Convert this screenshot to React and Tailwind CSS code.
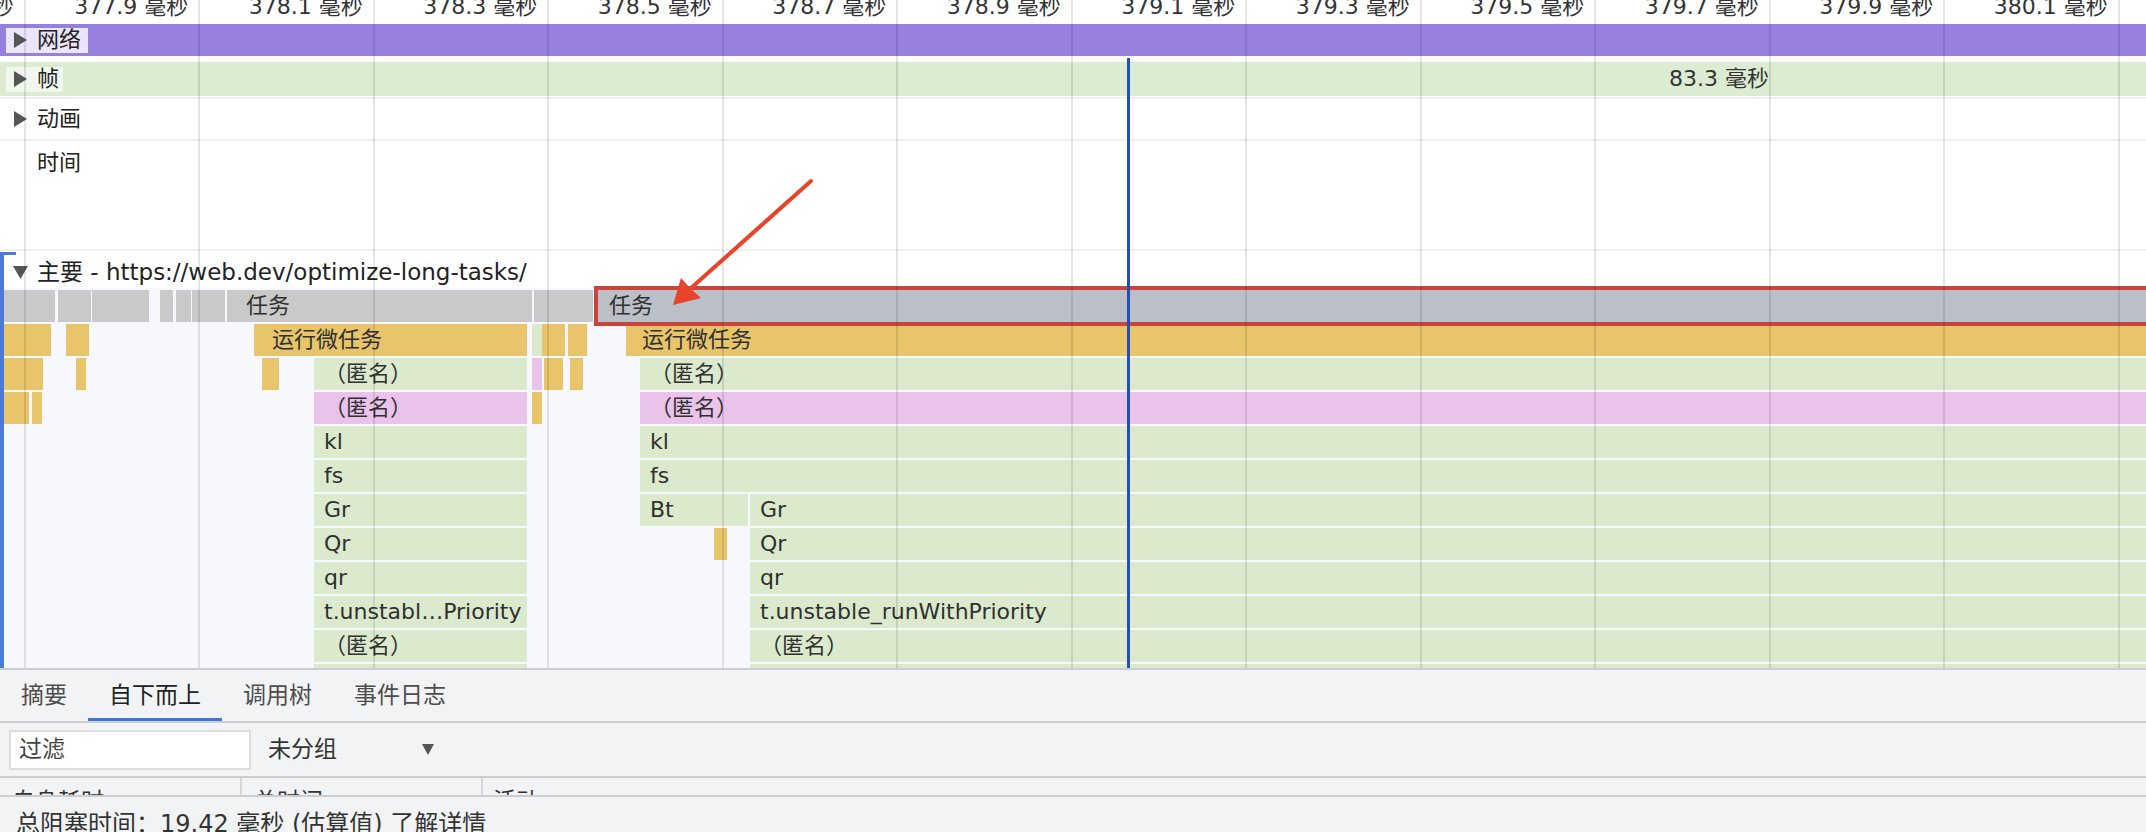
import React from 'react'

const FONT = "font-['DejaVu_Sans','Noto_Sans_CJK_SC',sans-serif]"

// grid lines of the time ruler (every 0.2 ms)
const GRID = Array.from({ length: 13 }, (_, i) => 24.8 + i * 174.5)
const TICKS = GRID.map((x, i) => ({ x, label: `${(377.7 + i * 0.2).toFixed(1)} 毫秒` }))

const COLORS = {
  g: 'bg-[#c9c9c9]',
  y: 'bg-[#e8c56a]',
  n: 'bg-[#dbeacc]',
  p: 'bg-[#eac3ea]',
}

const END = 2146

// flame chart rows: [from, to, color, label]
const ROWS = [
  [
    [3, 55, 'g'], [58, 63, 'g'], [64, 91, 'g'], [92, 149, 'g'], [160, 173, 'g'], [176, 191, 'g'],
    [192, 193, 'g'], [195, 197, 'g'], [202, 211, 'g'], [212, 225, 'g'], [227, 228, 'g'], [229, 231, 'g'],
    [236, 532, 'g', '任务'], [534, 593, 'g'],
  ],
  [
    [3, 51, 'y'], [66, 89, 'y'], [254, 257, 'y'], [262, 527, 'y', '运行微任务'], [532, 534, 'n'],
    [542, 565, 'y'], [568, 587, 'y'], [626, 629, 'y'], [632, END, 'y', '运行微任务'],
  ],
  [
    [3, 43, 'y'], [76, 85, 'y'], [262, 279, 'y'], [314, 527, 'n', '（匿名）'], [532, 534, 'p'],
    [544, 563, 'y'], [570, 583, 'y'], [640, END, 'n', '（匿名）'],
  ],
  [
    [3, 29, 'y'], [32, 41, 'y'], [314, 527, 'p', '（匿名）'], [532, 534, 'y'], [640, END, 'p', '（匿名）'],
  ],
  [[314, 527, 'n', 'kl'], [640, END, 'n', 'kl']],
  [[314, 527, 'n', 'fs'], [640, END, 'n', 'fs']],
  [[314, 527, 'n', 'Gr'], [640, 748, 'n', 'Bt'], [750, END, 'n', 'Gr']],
  [[314, 527, 'n', 'Qr'], [714, 727, 'y'], [750, END, 'n', 'Qr']],
  [[314, 527, 'n', 'qr'], [750, END, 'n', 'qr']],
  [[314, 527, 'n', 't.unstabl…Priority'], [750, END, 'n', 't.unstable_runWithPriority']],
  [[314, 527, 'n', '（匿名）'], [750, END, 'n', '（匿名）']],
  [[314, 527, 'n'], [750, END, 'n']],
]

function Right() {
  return (
    <svg width="13" height="16" viewBox="0 0 13 16" className="shrink-0">
      <polygon points="0,0 13,8 0,16" fill="#555" />
    </svg>
  )
}

function Down({ w = 15, h = 13, fill = '#555' }) {
  return (
    <svg width={w} height={h} viewBox={`0 0 ${w} ${h}`} className="shrink-0">
      <polygon points={`0,0 ${w},0 ${w / 2},${h}`} fill={fill} />
    </svg>
  )
}

function Bar({ bar }) {
  const [x1, x2, c, label] = bar
  return (
    <div
      className={`absolute top-[2px] h-[32px] overflow-hidden whitespace-nowrap pl-[10px] text-[22px] leading-[32px] text-[#303030] ${COLORS[c]}`}
      style={{ left: x1, width: x2 - x1 }}
    >
      {label}
    </div>
  )
}

function Timeline() {
  return (
    <div className="relative h-[668px] shrink-0 overflow-hidden bg-white">
      {/* ruler */}
      <div className="relative h-[24px] overflow-hidden">
        {TICKS.map((t) => (
          <div
            key={t.label}
            className="absolute top-[-4px] whitespace-nowrap text-[22px] leading-[22px] text-[#333]"
            style={{ left: t.x - 11, transform: 'translateX(-100%)' }}
          >
            {t.label}
          </div>
        ))}
      </div>

      {/* network */}
      <div className="flex h-[32px] items-center bg-[#977fdd] pl-[6px]">
        <div className="flex h-[25px] items-center gap-[10px] bg-white/80 pl-[8px] pr-[7px] text-[22px] leading-[22px] text-[#222]">
          <Right />
          <span>网络</span>
        </div>
      </div>
      <div className="h-[6px]" />

      {/* frames */}
      <div className="relative flex h-[34px] items-center bg-[#dbecd2] pl-[6px]">
        <div className="flex h-[25px] items-center gap-[10px] bg-white/60 pl-[8px] pr-[4px] text-[22px] leading-[22px] text-[#222]">
          <Right />
          <span>帧</span>
        </div>
        <span className="absolute left-[1669px] whitespace-nowrap text-[22px] leading-[22px] text-[#333]">83.3 毫秒</span>
      </div>
      <div className="h-[3px] border-b-2 border-[#f0f0f0]" />

      {/* animations */}
      <div className="flex h-[42px] items-center gap-[10px] border-b-2 border-[#f0f0f0] pl-[14px] text-[22px] leading-[22px] text-[#222]">
        <Right />
        <span>动画</span>
      </div>

      {/* timings */}
      <div className="h-[110px] border-b-2 border-[#f0f0f0] pl-[37px] pt-[11px] text-[22px] leading-[22px] text-[#222]">
        时间
      </div>

      {/* main thread header */}
      <div className="flex h-[37px] items-start gap-[9px] pl-[13px] pt-[10px] text-[23px] leading-[23px] text-[#222]">
        <div className="pt-[5px]">
          <Down />
        </div>
        <span className="whitespace-nowrap">主要 - https://web.dev/optimize-long-tasks/</span>
      </div>

      {/* flame chart */}
      <div className="h-[380px] overflow-hidden bg-[#f7f8fd]">
        {ROWS.map((row, i) => (
          <div key={i} className="relative h-[34px]">
            {row.map((bar, j) => (
              <Bar key={j} bar={bar} />
            ))}
          </div>
        ))}
      </div>

      {/* selected task */}
      <div className="absolute left-[594px] right-[-10px] top-[286px] h-[40px] border-4 border-[#c9443b] bg-[#bbbfc8] pl-[11px] text-[22px] leading-[32px] text-[#303030]">
        任务
      </div>

      {/* grid lines */}
      {GRID.map((x) => (
        <div key={x} className="absolute top-0 h-[668px] w-[2px] bg-black/10" style={{ left: x - 1 }} />
      ))}

      {/* main thread bracket */}
      <div className="absolute left-0 top-[252px] h-[416px] w-[4px] bg-[#4a7bdb]" />
      <div className="absolute left-0 top-[252px] h-[3px] w-[16px] bg-[#4a7bdb]" />

      {/* cursor */}
      <div className="absolute left-[1127px] top-[58px] h-[610px] w-[3px] bg-[#2450b2]" />

      {/* annotation arrow */}
      <svg className="pointer-events-none absolute left-0 top-0" width="2146" height="668">
        <line x1="811" y1="181" x2="690" y2="289" stroke="#e8432b" strokeWidth="4" strokeLinecap="round" />
        <polygon points="673,305 681,278 690,288 701,298" fill="#e8432b" />
      </svg>
    </div>
  )
}

function BottomPanel() {
  const tabs = ['摘要', '自下而上', '调用树', '事件日志']
  return (
    <div className="flex flex-1 flex-col border-t-2 border-[#cbcdd1] bg-[#f1f3f4] text-[23px] leading-[23px] text-[#333]">
      <div className="flex h-[53px] shrink-0 border-b-2 border-[#cbcdd1]">
        {tabs.map((t, i) => (
          <div
            key={t}
            className={`relative flex h-full items-center px-[21px] ${i === 1 ? 'text-[#222]' : 'text-[#4d4d4d]'}`}
          >
            {t}
            {i === 1 && <div className="absolute bottom-0 left-0 right-0 h-[3px] bg-[#3c76db]" />}
          </div>
        ))}
      </div>

      <div className="flex h-[55px] shrink-0 items-center border-b-2 border-[#cbcdd1]">
        <div className="ml-[9px] flex h-[40px] w-[242px] items-center border-2 border-[#dcdde0] bg-white pl-[8px] text-[#444]">
          过滤
        </div>
        <div className="ml-[17px] flex items-center text-[#333]">
          <span className="w-[154px]">未分组</span>
          <Down w={12} h={11} fill="#555" />
        </div>
      </div>

      <div className="flex h-[19px] shrink-0 overflow-hidden border-b-2 border-[#cbcdd1] text-[#333]">
        <div className="w-[242px] shrink-0 border-r-2 border-[#d6d7da] pl-[12px] pt-[12px]">自身耗时</div>
        <div className="w-[241px] shrink-0 border-r-2 border-[#d6d7da] pl-[12px] pt-[12px]">总时间</div>
        <div className="pl-[10px] pt-[12px]">活动</div>
      </div>

      <div className="flex-1 overflow-hidden whitespace-nowrap pl-[16px] pt-[15px] text-[24px] leading-[24px] text-[#333]">
        总阻塞时间：19.42 毫秒 (估算值) 了解详情
      </div>
    </div>
  )
}

export default function App() {
  return (
    <div className={`flex h-[832px] w-[2146px] flex-col overflow-hidden bg-white ${FONT}`}>
      <Timeline />
      <BottomPanel />
    </div>
  )
}
